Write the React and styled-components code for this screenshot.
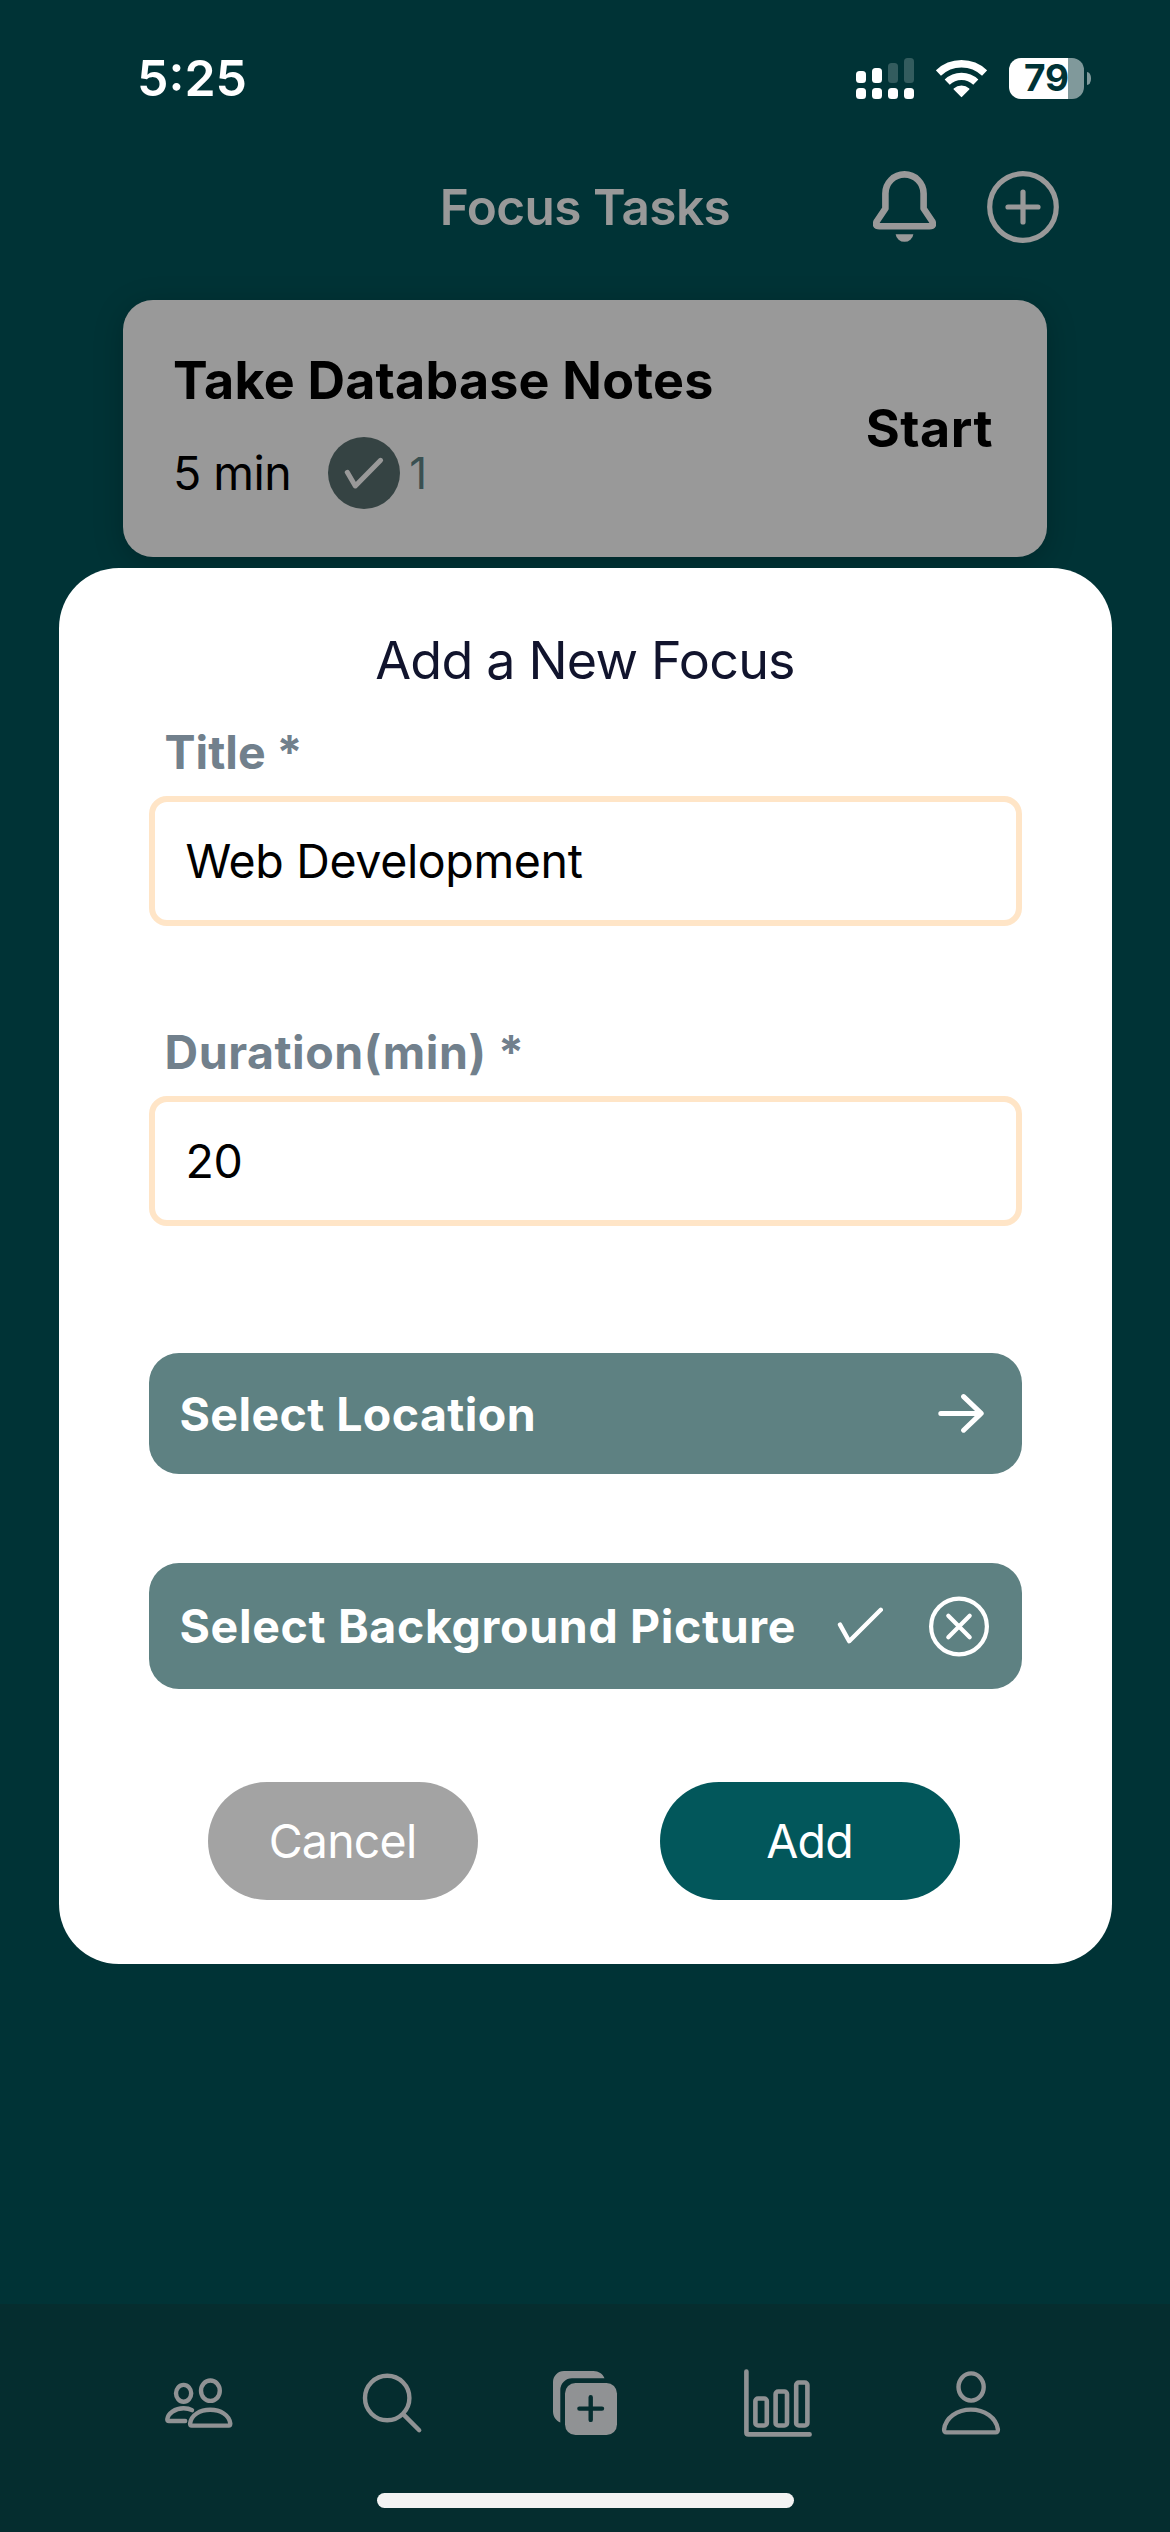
import React from "react";
import styled, { createGlobalStyle } from "styled-components";

const GlobalStyle = createGlobalStyle`
  * { box-sizing: border-box; }
  body { margin: 0; background: #003336; }
  button, input { font: inherit; border: 0; margin: 0; padding: 0; background: none; }
`;

const Screen = styled.div`
  position: relative;
  width: 1170px;
  height: 2532px;
  display: flex;
  flex-direction: column;
  background: #003336;
  font-family: Inter, "Liberation Sans", sans-serif;
  overflow: hidden;
`;

const Text = styled.span`
  display: block;
  white-space: nowrap;
  font-size: ${(p) => p.$size}px;
  font-weight: ${(p) => p.$weight || 400};
  line-height: 60px;
  letter-spacing: ${(p) => p.$track || 0}px;
  color: ${(p) => p.$color || "#000"};
`;

const StatusBar = styled.header`
  height: 156px;
  padding: 0 79px 0 137px;
  display: flex;
  align-items: center;
  justify-content: space-between;
`;

const StatusIcons = styled.div`
  display: flex;
  align-items: center;
  gap: 22px;
`;

const Battery = styled.div`
  display: flex;
  align-items: center;
  gap: 3px;
`;

const BatteryBody = styled.div`
  width: 75px;
  height: 41px;
  border-radius: 12px;
  display: flex;
  align-items: center;
  justify-content: center;
  background: linear-gradient(90deg, #fff 59px, #80999b 59px);
`;

const BatteryTip = styled.div`
  width: 4px;
  height: 13px;
  border-radius: 0 4px 4px 0 / 0 6px 6px 0;
  background: #80999b;
`;

const NavBar = styled.div`
  height: 102px;
  margin-bottom: 42px;
  padding: 0 111px;
  display: grid;
  grid-template-columns: 1fr auto 1fr;
  align-items: center;
`;

const NavActions = styled.div`
  grid-column: 3;
  display: flex;
  justify-content: flex-end;
  align-items: center;
  gap: 51px;
`;

const NavTitle = styled(Text)`
  grid-column: 2;
  margin: 0;
`;

const IconSvg = styled.svg`
  display: block;
  flex: none;
  fill: none;
  stroke: ${(p) => p.$color};
  stroke-width: ${(p) => p.$stroke || 4.4};
  stroke-linecap: round;
  stroke-linejoin: round;
`;

const TaskCard = styled.article`
  height: 257px;
  margin: 0 123px;
  padding: 0 54px 0 50px;
  border-radius: 30px;
  display: flex;
  align-items: center;
  justify-content: space-between;
  background: #999;
  box-shadow: 0 6px 30px rgba(0, 0, 0, 0.22);
`;

const TaskInfo = styled.div`
  display: flex;
  flex-direction: column;
  gap: 26px;
  padding-top: 3px;
`;

const TaskMeta = styled.div`
  display: flex;
  align-items: center;
  height: 72px;
`;

const DoneBadge = styled.div`
  width: 72px;
  height: 72px;
  margin: 0 9px 0 37px;
  border-radius: 50%;
  display: flex;
  align-items: center;
  justify-content: center;
  background: #354343;
`;

const TabBar = styled.nav`
  height: 228px;
  margin-top: auto;
  padding-top: 25px;
  display: flex;
  flex-direction: column;
  align-items: center;
  background: #052d2f;
`;

const Tabs = styled.div`
  height: 148px;
  display: flex;
`;

const Tab = styled.button`
  width: 193px;
  display: flex;
  align-items: center;
  justify-content: center;
`;

const HomeIndicator = styled.div`
  width: 417px;
  height: 15px;
  margin-top: 16px;
  border-radius: 8px;
  background: #f3f3f3;
`;

const ModalLayer = styled.div`
  position: absolute;
  inset: 0;
  display: flex;
  align-items: center;
  justify-content: center;
`;

const Modal = styled.section`
  width: 1053px;
  height: 1396px;
  padding: 63px 90px 0;
  border-radius: 60px;
  display: flex;
  flex-direction: column;
  background: #fff;
`;

const ModalTitle = styled(Text)`
  align-self: center;
  margin-bottom: 31px;
`;

const Field = styled.label`
  display: flex;
  flex-direction: column;
  gap: 14px;
  margin-bottom: ${(p) => p.$after}px;
`;

const FieldLabel = styled(Text)`
  padding-left: 16px;
`;

const Input = styled.input`
  && {
    width: 100%;
    height: 130px;
    padding: 0 0 0 31px;
    border: 6px solid #ffe5c7;
    border-radius: 18px;
    outline: none;
    font-size: 46.5px;
    letter-spacing: -0.35px;
    color: #000;
    background: #fff;
  }
`;

const SelectRow = styled.button`
  && {
    height: ${(p) => p.$height}px;
    margin-bottom: ${(p) => p.$after}px;
    padding: 0 ${(p) => p.$right}px 0 31px;
    border-radius: 30px;
    display: flex;
    align-items: center;
    justify-content: space-between;
    background: #5e8182;
  }
`;

const RowIcons = styled.div`
  display: flex;
  align-items: center;
  gap: 46px;
`;

const Actions = styled.div`
  display: flex;
  gap: 182px;
  padding-left: 59px;
`;

const Pill = styled.button`
  && {
    width: ${(p) => p.$width}px;
    height: 118px;
    border-radius: 60px;
    display: flex;
    align-items: center;
    justify-content: center;
    background: ${(p) => p.$bg};
  }
`;

const dim = "#999";
const tab = "#909294";

const Icon = ({ box, color, stroke, children }) => {
  const [, , w, h] = box.split(" ");
  return (
    <IconSvg width={w} height={h} viewBox={box} $color={color} $stroke={stroke}>
      {children}
    </IconSvg>
  );
};

const Signal = () => (
  <Icon box="856 57 58 41" color="none">
    <g fill="#fff">
      <rect x="856" y="70" width="10" height="12" rx="3.5" />
      <rect x="872" y="67" width="10" height="15" rx="3.5" />
      {[856, 872, 888, 904].map((x) => (
        <rect key={x} x={x} y="87" width="10" height="11" rx="3.5" />
      ))}
    </g>
    <g fill="#335c5e">
      <rect x="888" y="62" width="10" height="20" rx="3.5" />
      <rect x="904" y="57" width="10" height="25" rx="3.5" />
    </g>
  </Icon>
);

const Wifi = () => (
  <Icon box="936 57 51 41" color="#fff">
    <g strokeLinecap="butt">
      <path d="M938.4 72.1A33.3 33.3 0 0 1 984.6 72.1" strokeWidth="7.4" />
      <path d="M947.2 81.2A20.6 20.6 0 0 1 975.8 81.2" strokeWidth="7.3" />
    </g>
    <path d="M961.5 95.3L954.3 88A10.6 10.6 0 0 1 968.7 88Z" fill="#fff" strokeWidth="1.6" />
  </Icon>
);

const Bell = () => (
  <Icon box="873 170 63 73" color={dim} stroke="6.6">
    <path d="M885.4 192.5a19.1 19.1 0 0 1 38.2 0V207.5L932 220Q935 225.2 929.5 225.2H879.5Q874 225.2 877 220L885.4 207.5Z" />
    <path d="M895.6 233.2h17.8a9 9 0 0 1-17.8 0Z" fill={dim} stroke="none" />
  </Icon>
);

const AddCircle = () => (
  <Icon box="987 171 72 72" color={dim} stroke="5.2">
    <circle cx="1023" cy="207" r="33.3" />
    <path d="M1008 207H1038M1023 192V222" />
  </Icon>
);

const People = () => (
  <Icon box="165 2369 68 68" color={tab}>
    <ellipse cx="183.6" cy="2393.3" rx="7.6" ry="8.4" />
    <ellipse cx="210.4" cy="2390.7" rx="9.4" ry="10.2" />
    <path d="M192 2410.2C189.5 2408.8 186.5 2408.3 183.6 2408.3C175 2408.3 167.9 2413.5 167.3 2419.3Q167.3 2421 169 2421H185.2" />
    <path d="M191.6 2425.6Q190.1 2425.6 190.1 2423.6C191 2415 200 2409.8 210.2 2409.8C220.5 2409.8 229.4 2415 230.3 2423.6Q230.3 2425.6 228.8 2425.6Z" />
  </Icon>
);

const Search = () => (
  <Icon box="358 2369 68 68" color={tab}>
    <circle cx="387.2" cy="2398" r="22.2" />
    <path d="M403.4 2414.4L419.2 2430.2" />
  </Icon>
);

const AddStack = () => (
  <Icon box="551 2369 68 68" color={tab}>
    <rect x="565" y="2383" width="52" height="52" rx="10.5" fill={tab} stroke="none" />
    <path d="M560.3 2422.6C556 2420.6 553 2416.6 553 2411.5V2382A11 11 0 0 1 564 2371H593.5C598.5 2371 603 2374 604.5 2378.3H572A11.7 11.7 0 0 0 560.3 2390Z" fill={tab} stroke="none" />
    <path d="M579.4 2408.6H602M590.7 2397.3V2419.9" stroke="#052d2f" />
  </Icon>
);

const Chart = () => (
  <Icon box="744 2369 68 68" color={tab} stroke="4.6">
    <path d="M746.4 2371.5V2432.4Q746.4 2434.4 748.4 2434.4H809.6" />
    <rect x="755.4" y="2398.5" width="11.4" height="27" rx="2.6" />
    <rect x="775.6" y="2391.5" width="11.4" height="34" rx="2.6" />
    <rect x="796.2" y="2382.5" width="11.2" height="43" rx="2.6" />
  </Icon>
);

const Person = () => (
  <Icon box="937 2369 68 68" color={tab}>
    <ellipse cx="971.1" cy="2387" rx="12.6" ry="13.6" />
    <path d="M946.5 2432.4Q943.9 2432.4 944.1 2429.4C945.5 2417.5 957.5 2409.6 970.9 2409.6C984.3 2409.6 996.3 2417.5 997.9 2429.4Q998.1 2432.4 995.5 2432.4Z" />
  </Icon>
);

const DoneCheck = () => (
  <Icon box="340 453 48 40" color={dim} stroke="5">
    <path d="M347.3 472.3L355.3 486L380.6 460.3" />
  </Icon>
);

const ArrowRight = () => (
  <Icon box="938 1390 46 47" color="#fff" stroke="5">
    <path d="M940.8 1413.4H980.8M963.6 1396.6L981.2 1413.4L963.6 1430.2" />
  </Icon>
);

const PickedCheck = () => (
  <Icon box="837 1606 46 40" color="#fff" stroke="4.4">
    <path d="M840 1624.6L849.2 1641.2L880.8 1609.8" />
  </Icon>
);

const ClearCircle = () => (
  <Icon box="929 1596 60 61" color="#fff" stroke="4.2">
    <circle cx="959" cy="1626.5" r="27.9" />
    <path d="M948.3 1615.8L969.7 1637.2M969.7 1615.8L948.3 1637.2" />
  </Icon>
);

export default function App() {
  return (
    <>
      <GlobalStyle />
      <Screen>
        <StatusBar>
          <Text $size={50} $weight={600} $color="#fff">5:25</Text>
          <StatusIcons>
            <Signal />
            <Wifi />
            <Battery>
              <BatteryBody>
                <Text $size={37} $weight={700} $color="#003336">79</Text>
              </BatteryBody>
              <BatteryTip />
            </Battery>
          </StatusIcons>
        </StatusBar>
        <NavBar>
          <NavTitle as="h1" $size={49.5} $weight={600} $track={-0.55} $color={dim}>Focus Tasks</NavTitle>
          <NavActions>
            <Bell />
            <AddCircle />
          </NavActions>
        </NavBar>
        <TaskCard>
          <TaskInfo>
            <Text $size={52} $weight={700} $track={0.2}>Take Database Notes</Text>
            <TaskMeta>
              <Text $size={46.5} $track={-0.5}>5 min</Text>
              <DoneBadge>
                <DoneCheck />
              </DoneBadge>
              <Text $size={44} $color="#3a5051">1</Text>
            </TaskMeta>
          </TaskInfo>
          <Text $size={52} $weight={700} $track={0.5}>Start</Text>
        </TaskCard>
        <TabBar>
          <Tabs>
            {[People, Search, AddStack, Chart, Person].map((Glyph, i) => (
              <Tab key={i}>
                <Glyph />
              </Tab>
            ))}
          </Tabs>
          <HomeIndicator />
        </TabBar>
        <ModalLayer>
          <Modal>
            <ModalTitle $size={52} $track={-0.8} $color="#11142d">Add a New Focus</ModalTitle>
            <Field $after={96}>
              <FieldLabel $size={46.5} $weight={700} $color="#71808c">Title *</FieldLabel>
              <Input defaultValue="Web Development" />
            </Field>
            <Field $after={127}>
              <FieldLabel $size={46.5} $weight={700} $track={0.55} $color="#71808c">Duration(min) *</FieldLabel>
              <Input defaultValue="20" />
            </Field>
            <SelectRow $height={121} $after={89} $right={38}>
              <Text $size={46.5} $weight={700} $track={0.4} $color="#fff">Select Location</Text>
              <ArrowRight />
            </SelectRow>
            <SelectRow $height={126} $after={93} $right={33}>
              <Text $size={46.5} $weight={700} $track={0.65} $color="#fff">Select Background Picture</Text>
              <RowIcons>
                <PickedCheck />
                <ClearCircle />
              </RowIcons>
            </SelectRow>
            <Actions>
              <Pill $width={270} $bg="#a3a3a3">
                <Text $size={46.5} $track={-0.8} $color="#fff">Cancel</Text>
              </Pill>
              <Pill $width={300} $bg="#02575b">
                <Text $size={46.5} $track={-0.8} $color="#fff">Add</Text>
              </Pill>
            </Actions>
          </Modal>
        </ModalLayer>
      </Screen>
    </>
  );
}
